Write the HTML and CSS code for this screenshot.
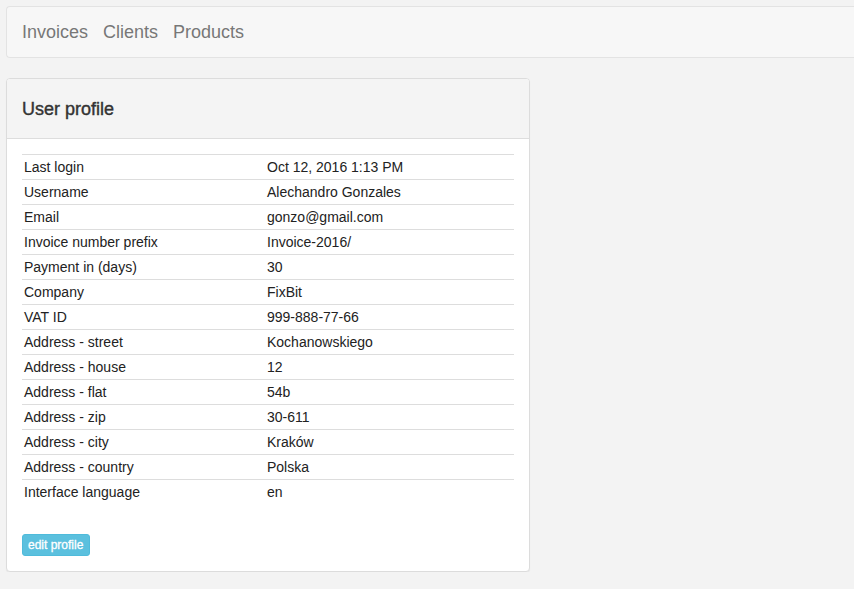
FILE: index.html
```html
<!DOCTYPE html>
<html>
<head>
<meta charset="utf-8">
<link rel="stylesheet" href="styles.css">
</head>
<body>
<nav class="navbar">
  <a class="nav-link" href="#">Invoices</a>
  <a class="nav-link" href="#">Clients</a>
  <a class="nav-link" href="#">Products</a>
</nav>
<div class="panel">
  <div class="panel-heading"><h3 class="panel-title">User profile</h3></div>
  <div class="panel-body">
    <table class="profile-table">
      <colgroup><col class="col-label"><col></colgroup>
      <tbody>
        <tr><td>Last login</td><td>Oct 12, 2016 1:13 PM</td></tr>
        <tr><td>Username</td><td>Alechandro Gonzales</td></tr>
        <tr><td>Email</td><td>gonzo@gmail.com</td></tr>
        <tr><td>Invoice number prefix</td><td>Invoice-2016/</td></tr>
        <tr><td>Payment in (days)</td><td>30</td></tr>
        <tr><td>Company</td><td>FixBit</td></tr>
        <tr><td>VAT ID</td><td>999-888-77-66</td></tr>
        <tr><td>Address - street</td><td>Kochanowskiego</td></tr>
        <tr><td>Address - house</td><td>12</td></tr>
        <tr><td>Address - flat</td><td>54b</td></tr>
        <tr><td>Address - zip</td><td>30-611</td></tr>
        <tr><td>Address - city</td><td>Kraków</td></tr>
        <tr><td>Address - country</td><td>Polska</td></tr>
        <tr><td>Interface language</td><td>en</td></tr>
      </tbody>
    </table>
    <a class="btn-edit" href="#">edit profile</a>
  </div>
</div>
</body>
</html>
```
FILE: styles.css
```css
html, body {
  margin: 0;
  padding: 0;
}
body {
  background: #f3f3f3;
  font-family: "Liberation Sans", Arial, sans-serif;
  color: #333;
  font-size: 14px;
  line-height: 20px;
  padding: 6px 0 0 6px;
  overflow: hidden;
}
.navbar {
  box-sizing: border-box;
  height: 52px;
  background: #f7f7f7;
  border: 1px solid #e3e3e3;
  border-right: none;
  border-radius: 4px 0 0 4px;
  display: flex;
  align-items: center;
  padding-left: 15px;
  gap: 15px;
}
.nav-link {
  color: #777;
  font-size: 18px;
  line-height: 20px;
  text-decoration: none;
}
.panel {
  margin-top: 20px;
  width: 524px;
  box-sizing: border-box;
  background: #fff;
  border: 1px solid #dcdcdc;
  border-radius: 4px;
  box-shadow: 0 1px 1px rgba(0,0,0,0.05);
}
.panel-heading {
  height: 60px;
  box-sizing: border-box;
  background: #f4f4f4;
  border-bottom: 1px solid #ddd;
  border-radius: 3px 3px 0 0;
  display: flex;
  align-items: center;
  padding: 0 15px;
}
.panel-title {
  margin: 0;
  font-size: 18px;
  font-weight: normal;
  color: #333;
  line-height: 20px;
  -webkit-text-stroke: 0.4px #333;
}
.panel-body {
  padding: 15px;
}
.profile-table {
  width: 100%;
  border-collapse: collapse;
  table-layout: fixed;
  margin-bottom: 30px;
}
.col-label {
  width: 243px;
}
.profile-table td {
  border-top: 1px solid #ddd;
  padding: 2px 2px;
  line-height: 20px;
  color: #222;
}
.btn-edit {
  display: inline-block;
  box-sizing: border-box;
  height: 22px;
  padding: 1px 6px 1px 5px;
  font-size: 12px;
  line-height: 18px;
  color: #fff;
  background: #5bc0de;
  border: 1px solid #4fbbdb;
  border-radius: 3px;
  text-decoration: none;
  vertical-align: top;
  -webkit-text-stroke: 0.3px #fff;
}
```
